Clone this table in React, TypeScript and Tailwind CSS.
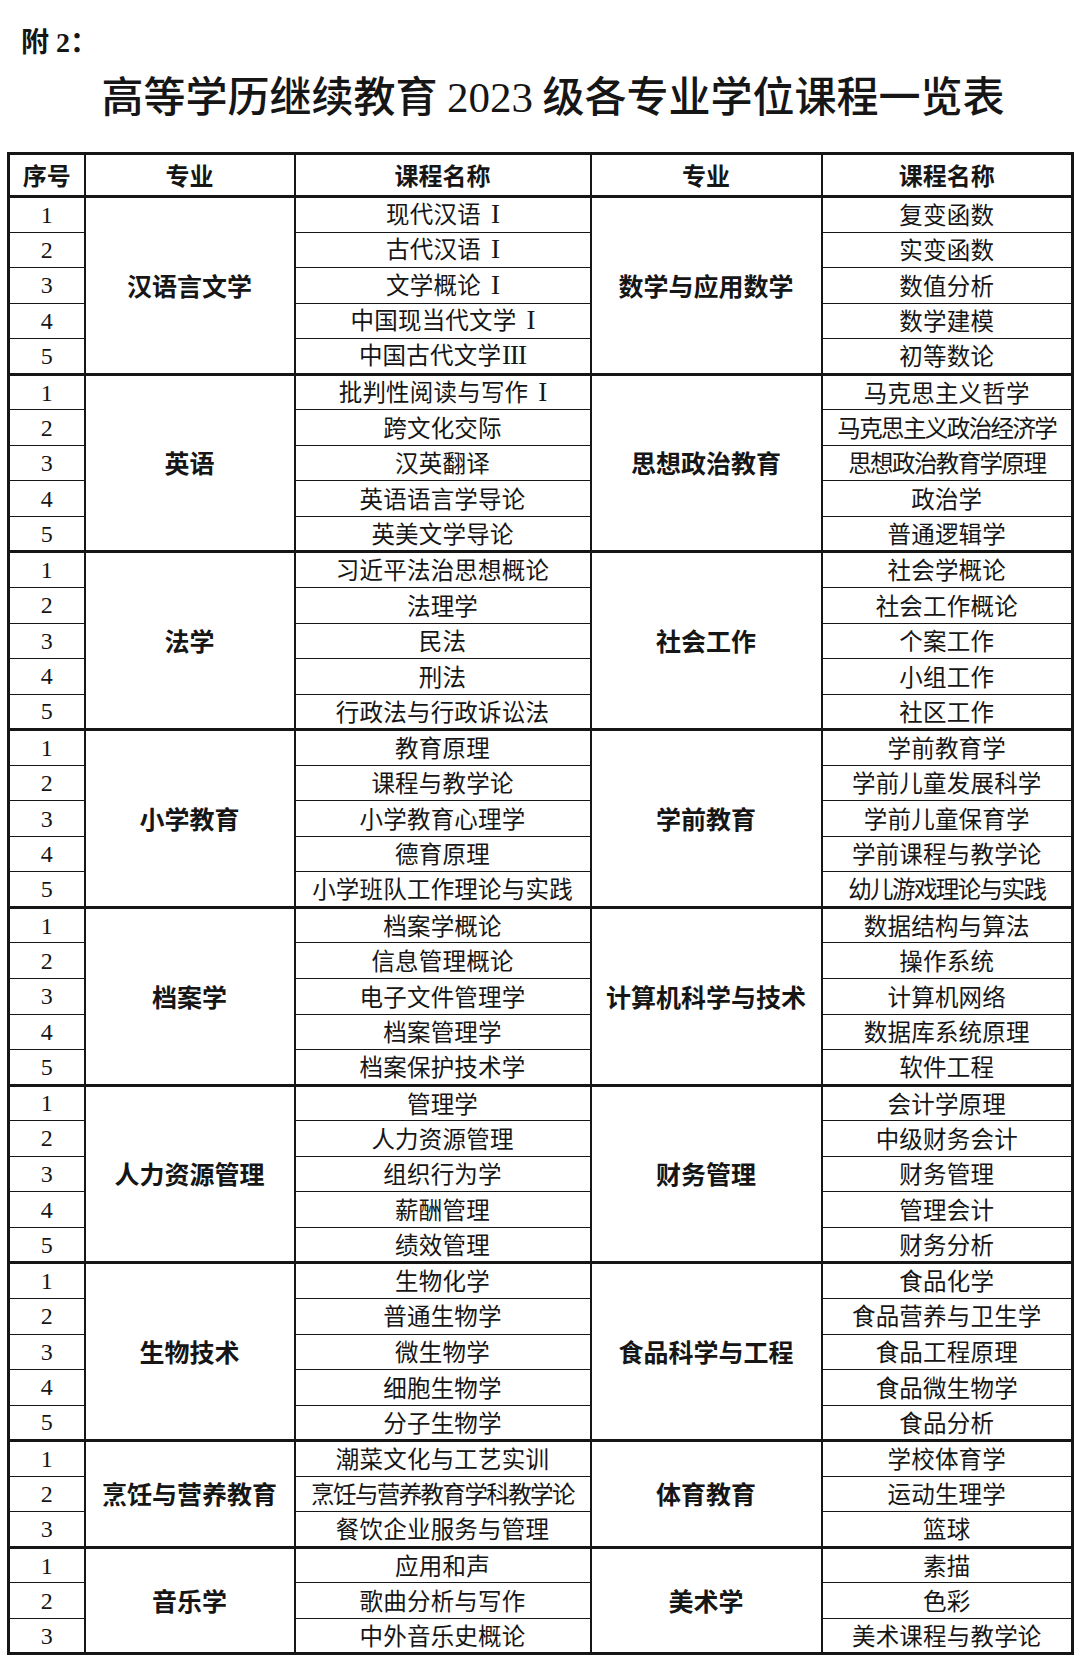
import React from "react";

type Group = {
  left: string;
  leftCourses: string[];
  right: string;
  rightCourses: string[];
};

const groups: Group[] = [
  {
    left: "汉语言文学",
    leftCourses: ["现代汉语 I", "古代汉语 I", "文学概论 I", "中国现当代文学 I", "中国古代文学III"],
    right: "数学与应用数学",
    rightCourses: ["复变函数", "实变函数", "数值分析", "数学建模", "初等数论"],
  },
  {
    left: "英语",
    leftCourses: ["批判性阅读与写作 I", "跨文化交际", "汉英翻译", "英语语言学导论", "英美文学导论"],
    right: "思想政治教育",
    rightCourses: ["马克思主义哲学", "马克思主义政治经济学", "思想政治教育学原理", "政治学", "普通逻辑学"],
  },
  {
    left: "法学",
    leftCourses: ["习近平法治思想概论", "法理学", "民法", "刑法", "行政法与行政诉讼法"],
    right: "社会工作",
    rightCourses: ["社会学概论", "社会工作概论", "个案工作", "小组工作", "社区工作"],
  },
  {
    left: "小学教育",
    leftCourses: ["教育原理", "课程与教学论", "小学教育心理学", "德育原理", "小学班队工作理论与实践"],
    right: "学前教育",
    rightCourses: ["学前教育学", "学前儿童发展科学", "学前儿童保育学", "学前课程与教学论", "幼儿游戏理论与实践"],
  },
  {
    left: "档案学",
    leftCourses: ["档案学概论", "信息管理概论", "电子文件管理学", "档案管理学", "档案保护技术学"],
    right: "计算机科学与技术",
    rightCourses: ["数据结构与算法", "操作系统", "计算机网络", "数据库系统原理", "软件工程"],
  },
  {
    left: "人力资源管理",
    leftCourses: ["管理学", "人力资源管理", "组织行为学", "薪酬管理", "绩效管理"],
    right: "财务管理",
    rightCourses: ["会计学原理", "中级财务会计", "财务管理", "管理会计", "财务分析"],
  },
  {
    left: "生物技术",
    leftCourses: ["生物化学", "普通生物学", "微生物学", "细胞生物学", "分子生物学"],
    right: "食品科学与工程",
    rightCourses: ["食品化学", "食品营养与卫生学", "食品工程原理", "食品微生物学", "食品分析"],
  },
  {
    left: "烹饪与营养教育",
    leftCourses: ["潮菜文化与工艺实训", "烹饪与营养教育学科教学论", "餐饮企业服务与管理"],
    right: "体育教育",
    rightCourses: ["学校体育学", "运动生理学", "篮球"],
  },
  {
    left: "音乐学",
    leftCourses: ["应用和声", "歌曲分析与写作", "中外音乐史概论"],
    right: "美术学",
    rightCourses: ["素描", "色彩", "美术课程与教学论"],
  },
];

const tight = new Set([
  "马克思主义政治经济学",
  "思想政治教育学原理",
  "幼儿游戏理论与实践",
  "烹饪与营养教育学科教学论",
]);

const sans = "font-['Noto_Sans_CJK_SC',sans-serif]";

function Course({ text }: { text: string }) {
  const m = text.match(/^(.*?)(\s?)(I+)$/);
  if (!m) return <>{text}</>;
  return (
    <>
      {m[1]}
      <span
        className={`font-['Liberation_Serif',serif] text-[27px] tracking-[-1px] ${m[2] ? "ml-[10px]" : "ml-[1px]"}`}
      >
        {m[3]}
      </span>
    </>
  );
}

export default function App() {
  return (
    <div className="w-[1080px] h-[1668px] bg-white text-[#161616] overflow-hidden">
      <div className="pt-[22px] pl-[21px] h-[64px] text-[28px] leading-[36px] font-bold font-['Liberation_Serif','Noto_Sans_CJK_SC',serif]">
        <span className={sans}>附</span> 2<span className={sans}>：</span>
      </div>
      <div className="h-[88px] pt-[2px] pl-[26px] text-center whitespace-pre text-[42px] leading-[56px] font-['Noto_Sans_CJK_SC',sans-serif] font-medium">
        {"高等学历继续教育 "}
        <span className="font-['Liberation_Serif',serif] font-normal text-[43px]">2023</span>
        {" 级各专业学位课程一览表"}
      </div>
      <div className="pl-[7px]">
        <table className="border-collapse border-[3px] border-[#161616] table-fixed w-[1064px]">
          <colgroup>
            <col className="w-[76px]" />
            <col className="w-[210px]" />
            <col className="w-[296px]" />
            <col className="w-[231px]" />
            <col className="w-[251px]" />
          </colgroup>
          <thead>
            <tr className={`h-[43px] text-[24px] font-bold ${sans}`}>
              <th className="border-[2px] border-b-[3px] border-[#161616] p-0">序号</th>
              <th className="border-[2px] border-b-[3px] border-[#161616] p-0">专业</th>
              <th className="border-[2px] border-b-[3px] border-[#161616] p-0">课程名称</th>
              <th className="border-[2px] border-b-[3px] border-[#161616] p-0">专业</th>
              <th className="border-[2px] border-b-[3px] border-[#161616] p-0">课程名称</th>
            </tr>
          </thead>
          <tbody>
            {groups.map((g, gi) =>
              g.leftCourses.map((c, i) => {
                const top = i === 0 ? "border-t-[3px]" : "border-t-[1.5px]";
                const rc = g.rightCourses[i];
                return (
                  <tr key={`${gi}-${i}`} className="h-[35.55px]">
                    <td className={`border-x-[2px] border-b-[1.5px] ${top} border-[#161616] p-0 text-center text-[24px] leading-none font-['Liberation_Serif',serif]`}>
                      {i + 1}
                    </td>
                    {i === 0 && (
                      <td
                        rowSpan={g.leftCourses.length}
                        className={`border-[2px] border-t-[3px] border-[#161616] p-0 text-center text-[25px] font-bold ${sans}`}
                      >
                        {g.left}
                      </td>
                    )}
                    <td
                      className={`border-x-[2px] border-b-[1.5px] ${top} border-[#161616] p-0 text-center whitespace-pre text-[23.5px] leading-none ${sans} ${tight.has(c) ? "tracking-[-1.6px]" : "tracking-[0.2px]"}`}
                    >
                      <Course text={c} />
                    </td>
                    {i === 0 && (
                      <td
                        rowSpan={g.leftCourses.length}
                        className={`border-[2px] border-t-[3px] border-[#161616] p-0 text-center text-[25px] font-bold ${sans}`}
                      >
                        {g.right}
                      </td>
                    )}
                    <td
                      className={`border-x-[2px] border-b-[1.5px] ${top} border-[#161616] p-0 text-center whitespace-pre text-[23.5px] leading-none ${sans} ${tight.has(rc) ? "tracking-[-1.6px]" : "tracking-[0.2px]"}`}
                    >
                      <Course text={rc} />
                    </td>
                  </tr>
                );
              })
            )}
          </tbody>
        </table>
      </div>
    </div>
  );
}
